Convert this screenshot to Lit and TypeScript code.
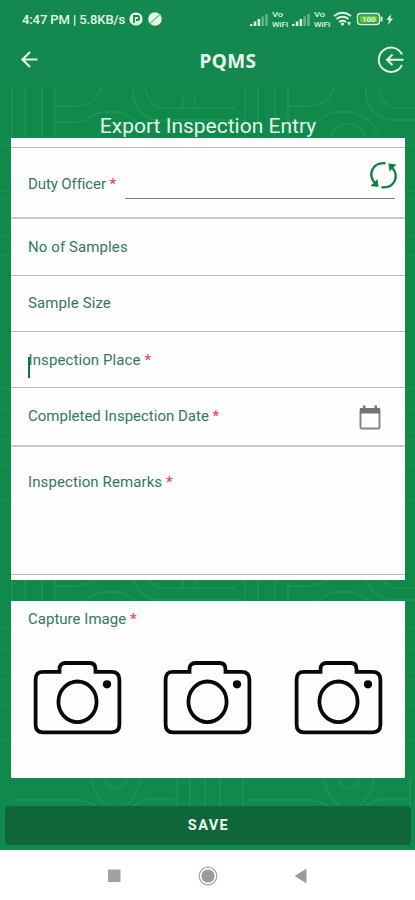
import { LitElement, html, svg, css, nothing } from "lit";
import { customElement, property } from "lit/decorators.js";

@customElement("field-label")
class FieldLabel extends LitElement {
  @property() text = "";
  @property({ type: Boolean }) required = false;
  static styles = css`
    :host { display: block; font: 400 15px/20px Roboto, sans-serif; letter-spacing: 0.1px; color: #33785a; white-space: nowrap; }
    .star { color: #ec4a48; font-weight: 500; }
  `;
  render() {
    return html`<span>${this.text}</span>${this.required ? html`<span class="star"> *</span>` : nothing}`;
  }
}

@customElement("camera-icon")
class CameraIcon extends LitElement {
  static styles = css`
    :host, svg { display: block; }
  `;
  render() {
    return html`<svg width="90" height="76" viewBox="0 0 90 76" fill="none" stroke="#080808" stroke-width="3.8">
      <path d="M10 11.8H27.5V9Q27.5 3 33.5 3H57.5Q63.5 3 63.5 9V11.8H79.5Q87.4 11.8 87.4 19.5V64.5Q87.4 72.3 79.5 72.3H11Q3.6 72.3 3.6 64.5V19.5Q3.6 11.8 11 11.8" />
      <ellipse cx="45.5" cy="41.8" rx="19.1" ry="20.3" />
      <circle cx="75" cy="24.3" r="4.1" fill="#080808" stroke="none" />
    </svg>`;
  }
}

@customElement("app-root")
class AppRoot extends LitElement {
  static styles = css`
    * { box-sizing: border-box; }
    :host { display: block; width: 415px; height: 900px; overflow: hidden; font-family: Roboto, sans-serif; background: #fff; }
    svg { display: block; }
    .screen { position: relative; height: 850px; background: #108a4b; display: flex; flex-direction: column; }
    .pattern { position: absolute; inset: 0; }
    .head { position: relative; height: 88px; background: #14894f; }
    .status { height: 38px; padding: 0 21px 0 22px; display: flex; align-items: center; color: #e4f6ea; font-size: 13px; font-weight: 500; letter-spacing: -0.1px; }
    .status .clock { width: 106px; white-space: nowrap; }
    .status .right { margin-left: auto; }
    .bar { height: 46px; padding: 0 10px 0 20px; display: grid; grid-template-columns: 1fr auto 1fr; align-items: center; }
    .bar .exit { justify-self: end; margin-top: -2px; }
    .bar .arrow { margin-top: -3px; }
    .bar .name { font: 700 19px/24px "Noto Sans", sans-serif; color: #e8faee; letter-spacing: 0.4px; padding-left: 31px; }
    .title { position: relative; height: 50px; padding: 25px 0 0 1px; text-align: center; font-size: 21px; line-height: 26px; letter-spacing: 0; color: #e4f8ea; }
    .card { position: relative; margin: 0 10px 0 11px; background: #fefefe; }
    .form { height: 442px; }
    .row { padding-left: 17px; border-bottom: 1.5px solid #bebebe; display: flex; align-items: flex-start; }
    .lead { height: 10px; }
    .officer { height: 71px; padding-top: 26px; border-bottom: 2px solid #cbcbcb; }
    .officer field-label { width: 89px; letter-spacing: -0.1px; }
    .input { flex: 1; height: 25px; margin: 0 10px 0 8px; border-bottom: 1.5px solid #7b7b7b; }
    .refresh { position: absolute; top: 22px; right: 7.5px; }
    .samples { height: 57px; padding-top: 18px; }
    .size { height: 56px; padding-top: 17px; }
    .place { height: 56px; padding-top: 18px; position: relative; }
    .place field-label { padding-left: 0.5px; }
    .caret { position: absolute; left: 17px; top: 25px; width: 2px; height: 21px; background: #087c35; }
    .date { height: 59px; padding-top: 18px; padding-right: 23px; justify-content: space-between; border-bottom: 2px solid #cbcbcb; }
    .date field-label { letter-spacing: 0; }
    .date svg { margin-top: -1px; }
    .remarks { height: 128px; padding-top: 25px; }
    .capture { height: 177px; margin-top: 21px; padding: 8px 0 0 17px; }
    .capture field-label { letter-spacing: 0.02px; }
    .cams { display: flex; gap: 40.3px; padding: 31px 0 0 4px; }
    .save { position: relative; margin: 28px 4px 0 5px; height: 39px; border: 0; border-radius: 4px; background: #0e663a; color: #eaf6ee; font: 700 14.5px/39px Roboto, sans-serif; letter-spacing: 1.4px; padding: 0 0 0 1px; }
    .nav { height: 50px; display: flex; align-items: center; padding: 1px 0 0 107px; }
    .nav .home { margin-left: 77px; }
    .nav .back { margin-left: 76px; }
  `;

  private topMotif(x: number, y: number) {
    return svg`<g transform="translate(${x} ${y})">
      <path d="M12 0V50M25 0V50M42 0V50M55 0V50M56 18H75Q95 18 101 0M56 34H77Q85 34 90 29Q100 23 115 24Q135 25 146 48M98 48Q103 36 115 36Q127 36 132 48M133 0V8Q138 30 158 32H245M145 0Q150 20 165 20H235M183 6V20M195 6V20" />
    </g>`;
  }

  private bottomMotif(x: number, y: number) {
    return svg`<g transform="translate(${x} ${y})">
      <path d="M14 22H75Q90 22 100 32M91 0Q94 19 106 28M141 0Q138 19 126 28M105 0Q107 10 116 10Q125 10 127 0M130 30Q143 21 153 21H175M177 0V30M190 0V30M205 0V30M220 0V30M243 0V30" />
    </g>`;
  }

  private edgeTicks() {
    const d = [146, 168, 191, 198, 224, 236, 255, 388, 410, 433, 440, 466, 500, 628, 650, 673, 680, 706, 740]
      .map((y) => `M0 ${y}H10M406 ${y}H415`)
      .join("");
    return svg`<path d=${d} stroke-opacity="0.6" />`;
  }

  private bars(x: number) {
    return [0, 1, 2, 3, 4].map(
      (i) => svg`<rect x=${x + i * 3.8} y=${14 - i * 2.5} width="2.5" height=${2 + i * 2.5} fill="#def3e5" opacity=${i > 2 ? 0.4 : 1} />`
    );
  }

  render() {
    return html`
      <main class="screen">
        <svg class="pattern" width="415" height="850" fill="none" stroke="#3bad70" stroke-width="2" opacity="0.23">
          ${this.topMotif(0, 88)}${this.topMotif(233, 88)}
          ${this.topMotif(0, 568)}${this.topMotif(233, 568)}
          ${this.bottomMotif(0, 778)}${this.bottomMotif(233, 778)}
          ${this.edgeTicks()}
        </svg>
        <header class="head">
          <div class="status">
            <span class="clock">4:47 PM | 5.8KB/s</span>
            <svg width="36" height="16" viewBox="0 0 36 16">
              <circle cx="8" cy="8" r="6.6" fill="#e4f6ea" />
              <path d="M6 12V5H9.2A2 2 0 0 1 9.2 9H8" fill="none" stroke="#14894f" stroke-width="1.8" />
              <circle cx="27" cy="8" r="6.8" fill="#e4f6ea" />
              <path d="M22 12.5L32 3.5" stroke="#7dbd99" stroke-width="1.4" />
            </svg>
            <svg class="right" width="145" height="18" viewBox="0 0 145 18" font-family="Roboto, sans-serif" font-weight="500" font-size="7.5" fill="#def3e5">
              ${this.bars(1)}
              <text x="23" y="6.5" textLength="11" lengthAdjust="spacingAndGlyphs">Vo</text><text x="23" y="16.5" textLength="16" lengthAdjust="spacingAndGlyphs">WiFi</text>
              ${this.bars(43)}
              <text x="65" y="6.5" textLength="11" lengthAdjust="spacingAndGlyphs">Vo</text><text x="65" y="16.5" textLength="16" lengthAdjust="spacingAndGlyphs">WiFi</text>
              <g fill="none" stroke="#def3e5" stroke-width="2">
                <path d="M85 6Q93.5 -0.5 102 6M87.5 9Q93.5 4.5 99.5 9M90 12Q93.5 9.5 97 12" />
              </g>
              <circle cx="93.5" cy="14" r="1.6" /><path d="M98 12l2 4 2-4z" />
              <rect x="108.5" y="3.5" width="22" height="11" rx="3" fill="none" stroke="#def3e5" stroke-width="1.4" />
              <rect x="110.5" y="5.5" width="18" height="7" rx="1" fill="#62c829" />
              <rect x="131.5" y="6.5" width="2" height="5" rx="1" />
              <text x="113" y="11.8" font-weight="700" textLength="13.5" lengthAdjust="spacingAndGlyphs">100</text>
              <path d="M142 4L137.5 10H140L139 15L144 8.5H141.5Z" />
            </svg>
          </div>
          <div class="bar">
            <svg class="arrow" width="20" height="20" viewBox="0 0 20 20" fill="none" stroke="#e4f8ea" stroke-width="2.2">
              <path d="M10 2L2.5 9.5L10 17M2.5 9.5H17.5" />
            </svg>
            <span class="name">PQMS</span>
            <svg class="exit" width="28" height="28" viewBox="0 0 28 28" fill="none" stroke="#e4f8ea" stroke-width="1.9">
              <path d="M25 8.5A12.2 12.2 0 1 0 25 19M26.5 13.8H10M15.5 8.5L10 13.8L15.5 19" />
            </svg>
          </div>
        </header>
        <div class="title">Export Inspection Entry</div>
        <section class="card form">
          <div class="row lead"></div>
          <div class="row officer">
            <field-label text="Duty Officer" required></field-label>
            <div class="input"></div>
            <svg class="refresh" width="30" height="30" viewBox="0 0 30 30" fill="none" stroke="#147d43" stroke-width="2.4">
              <path d="M17.5 3.2C3.5 2 -0.5 15.5 7.5 23.5M13.5 27.3C27.5 28.5 31.5 15 23.5 7" />
              <path d="M2.5 26L10.5 27L9.5 19ZM28.5 4.5L20.5 3.5L21.5 11.5Z" fill="#147d43" stroke="none" />
            </svg>
          </div>
          <div class="row samples"><field-label text="No of Samples"></field-label></div>
          <div class="row size"><field-label text="Sample Size"></field-label></div>
          <div class="row place"><field-label text="Inspection Place" required></field-label><i class="caret"></i></div>
          <div class="row date">
            <field-label text="Completed Inspection Date" required></field-label>
            <svg width="24" height="26" viewBox="0 0 24 26">
              <rect x="2.5" y="4" width="19" height="19.5" rx="1.8" fill="none" stroke="#858585" stroke-width="2" />
              <path d="M2 3H22V8.5H2ZM5 0.5H7.5V4H5ZM16.5 0.5H19V4H16.5Z" fill="#747474" />
            </svg>
          </div>
          <div class="row remarks"><field-label text="Inspection Remarks" required></field-label></div>
        </section>
        <section class="card capture">
          <field-label text="Capture Image" required></field-label>
          <div class="cams"><camera-icon></camera-icon><camera-icon></camera-icon><camera-icon></camera-icon></div>
        </section>
        <button class="save">SAVE</button>
      </main>
      <nav class="nav">
        <svg width="14" height="14"><rect x="1" y="0.5" width="12.5" height="12.5" fill="#a0a0a0" /></svg>
        <svg class="home" width="20" height="20" viewBox="0 0 20 20">
          <circle cx="10" cy="10" r="8.8" fill="none" stroke="#a8a8a8" stroke-width="1.3" /><circle cx="10" cy="10" r="6.6" fill="#9b9b9b" />
        </svg>
        <svg class="back" width="14" height="16"><path d="M0.5 8L12.5 0.8V15.2Z" fill="#9b9b9b" /></svg>
      </nav>
    `;
  }
}
